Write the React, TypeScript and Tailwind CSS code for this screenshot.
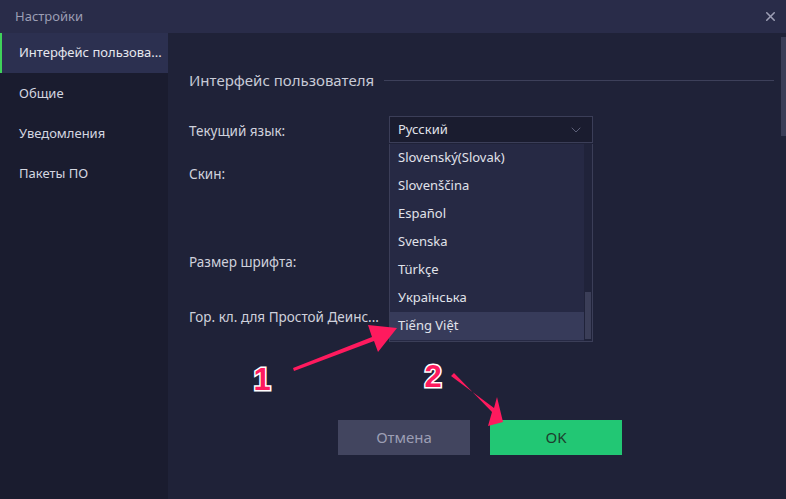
import { X, ChevronDown } from "lucide-react";

const navItems = ["Интерфейс пользова...", "Общие", "Уведомления", "Пакеты ПО"];
const languages = ["Slovenský(Slovak)", "Slovenščina", "Español", "Svenska", "Türkçe", "Українська", "Tiếng Việt"];

const Sidebar = () => (
    <div className="w-[168px] shrink-0 bg-[#1a1c2f] flex flex-col">
        {navItems.map((item, i) => (
            <div key={item}
                className={i === 0
                    ? "h-[40px] mb-[1px] flex items-center pl-[17px] border-l-2 border-[#3fd25a] bg-[#2c3050] text-[#e6e7ee]"
                    : "h-[40px] flex items-center pl-[19px] text-[#d4d6e0]"}>
                {item}
            </div>
        ))}
    </div>
);

const LanguageSelect = () => (
    <div className="relative w-[204px]">
        <div className="h-[27px] flex items-center justify-between pl-[8px] pr-[8px] bg-[#1a1c2f] border border-[#3b3e58] text-[#e0e2ea]">
            <span>Русский</span>
            <ChevronDown className="h-4 w-4 text-[#5c5f78]" strokeWidth={1.5} />
        </div>
        <div className="absolute left-0 top-[28px] w-[204px] h-[198px] bg-[#262944] border border-t-0 border-[#3b3e58] flex">
            <div className="flex-1 flex flex-col">
                {languages.map((lang, i) => (
                    <div key={lang}
                        className={i === languages.length - 1
                            ? "h-[28px] flex items-center pl-[8px] bg-[#373b5a] text-[#e0e2ea]"
                            : "h-[28px] flex items-center pl-[8px] text-[#e0e2ea]"}>
                        {lang}
                    </div>
                ))}
            </div>
            <div className="w-[8px] flex flex-col bg-[#20233a]">
                <div className="flex-1"></div>
                <div className="h-[47px] mb-[2px] mx-[1px] bg-[#3b3e58]"></div>
            </div>
        </div>
    </div>
);

const Annotations = () => (
    <svg className="absolute inset-0 pointer-events-none" width="786" height="499" viewBox="0 0 786 499">
        <polygon points="293,368 372,337 368,325 397,328 378,352 374,341 294,371" fill="#ff1a5e" />
        <polygon points="451,376 494,408 497,397 503,422 488,426 492,412 454,373" fill="#ff1a5e" />
        <text x="262" y="390" textAnchor="middle" fontFamily="Liberation Sans, Arial, sans-serif" fontWeight="700" fontSize="31"
            fill="#ff1a5e" stroke="#ffffff" strokeWidth="3" paintOrder="stroke">1</text>
        <text x="433" y="387" textAnchor="middle" fontFamily="Liberation Sans, Arial, sans-serif" fontWeight="700" fontSize="31"
            fill="#ff1a5e" stroke="#ffffff" strokeWidth="3" paintOrder="stroke">2</text>
    </svg>
);

const App = () => {
    return (
        <div className="relative w-[786px] h-[499px] overflow-hidden flex flex-col text-[13px] bg-[#1f2238]"
            style={{ fontFamily: '"Noto Sans", "Open Sans", sans-serif' }}>
            <header className="h-[33px] shrink-0 bg-[#292c49] flex items-center justify-between pl-[15px] pr-[8px]">
                <span className="text-[#9c9eb4] text-[13px]">Настройки</span>
                <X className="h-[15px] w-[15px] text-[#9c9eb4]" strokeWidth={2.5} />
            </header>
            <div className="flex flex-1">
                <Sidebar />
                <main className="relative flex-1 flex flex-col pl-[21px] pr-[12px]">
                    <div className="h-[83px] pt-[36px]">
                        <div className="h-[22px] flex items-center gap-[10px]">
                            <span className="text-[15px] text-[#c8cad6]">Интерфейс пользователя</span>
                            <div className="flex-1 h-px bg-[#3d405a]"></div>
                        </div>
                    </div>
                    <div className="flex h-[43px]">
                        <div className="w-[200px] pt-[5px] text-[13.5px] text-[#cfd1dc]">Текущий язык:</div>
                        <LanguageSelect />
                    </div>
                    <div className="h-[88px] pt-[5px] text-[13.5px] text-[#cfd1dc]">Скин:</div>
                    <div className="h-[55px] pt-[5px] text-[13.5px] text-[#cfd1dc]">Размер шрифта:</div>
                    <div className="h-[118px] pt-[5px] text-[13.5px] text-[#cfd1dc]">Гор. кл. для Простой Деинс...</div>
                    <div className="flex gap-[20px] pl-[149px]">
                        <button className="w-[132px] h-[35px] bg-[#42455f] text-[#9c9eb4] text-[15px]">Отмена</button>
                        <button className="w-[132px] h-[35px] bg-[#22c774] text-[#1d3d2e] text-[15px]">OK</button>
                    </div>
                    <div className="absolute right-0 top-[4px] w-[5px] h-[99px] bg-[#3a3d57]"></div>
                </main>
            </div>
            <Annotations />
        </div>
    );
};

export default App;
